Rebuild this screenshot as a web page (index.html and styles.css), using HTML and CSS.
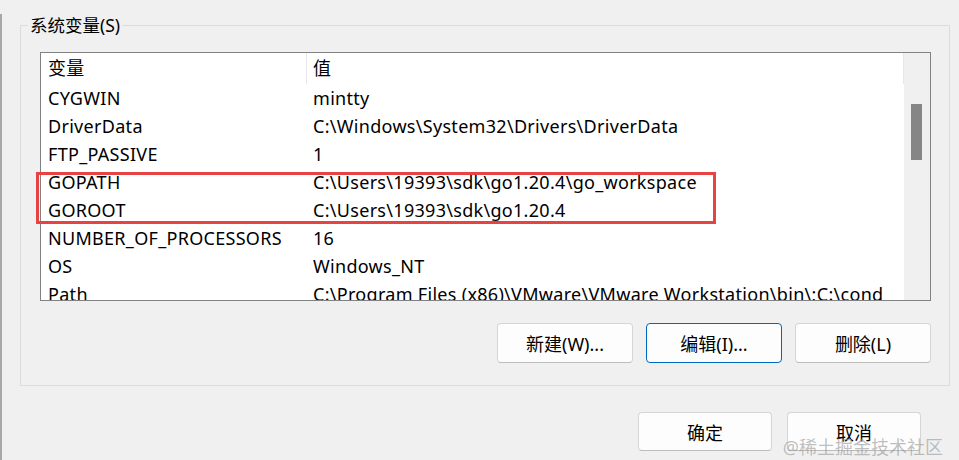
FILE: index.html
```html
<!DOCTYPE html>
<html lang="zh-CN">
<head>
<meta charset="utf-8"/>
<title>环境变量</title>
<link rel="stylesheet" href="styles.css">
</head>
<body>
<div class="dialog">
  <fieldset class="group">
    <legend>系统变量(S)</legend>
    <div class="list">
      <div class="list-body">
        <div class="row head"><span class="col-name">变量</span><span class="col-value">值</span></div>
        <div class="row"><span class="col-name">CYGWIN</span><span class="col-value">mintty</span></div>
        <div class="row"><span class="col-name">DriverData</span><span class="col-value">C:\Windows\System32\Drivers\DriverData</span></div>
        <div class="row"><span class="col-name">FTP_PASSIVE</span><span class="col-value">1</span></div>
        <div class="row"><span class="col-name">GOPATH</span><span class="col-value">C:\Users\19393\sdk\go1.20.4\go_workspace</span></div>
        <div class="row"><span class="col-name">GOROOT</span><span class="col-value">C:\Users\19393\sdk\go1.20.4</span></div>
        <div class="row"><span class="col-name">NUMBER_OF_PROCESSORS</span><span class="col-value">16</span></div>
        <div class="row"><span class="col-name">OS</span><span class="col-value">Windows_NT</span></div>
        <div class="row"><span class="col-name">Path</span><span class="col-value">C:\Program Files (x86)\VMware\VMware Workstation\bin\;C:\conda3\condabin</span></div>
      </div>
      <div class="scrollbar"><div class="thumb"></div></div>
      <div class="mark"></div>
    </div>
    <div class="actions">
      <button class="btn">新建(W)...</button>
      <button class="btn focused">编辑(I)...</button>
      <button class="btn">删除(L)</button>
    </div>
  </fieldset>
  <div class="footer">
    <button class="btn small">确定</button>
    <button class="btn small">取消</button>
  </div>
  <div class="watermark">@稀土掘金技术社区</div>
</div>
</body>
</html>
```

FILE: styles.css
```css
html, body {
  margin: 0;
  height: 100%;
}
body {
  background: #f0f0f0;
  font-family: "Noto Sans", "Noto Sans CJK SC", sans-serif;
  font-size: 17px;
  color: #000;
  overflow: hidden;
}
.dialog {
  position: relative;
  height: 100%;
  border-left: 2px solid #a8a8a8;
  box-sizing: border-box;
}

/* group box */
.group {
  margin: 14px 9px 0 18px;
  padding: 16px 18px 22px 19px;
  border: 1px solid #dcdcdc;
  min-width: 0;
}
.group legend {
  margin-left: -12px;
  padding: 0 2px;
  line-height: 22px;
  font-size: 17.5px;
}

/* list view */
.list {
  position: relative;
  display: grid;
  grid-template-columns: 1fr 26px;
  height: 249px;
  box-sizing: border-box;
  border: 1px solid #828282;
  background: #fff;
  font-size: 18px;
  letter-spacing: 0.3px;
}
.list-body {
  overflow: hidden;
}
.row {
  display: flex;
  height: 28px;
  line-height: 28px;
  white-space: nowrap;
}
.row.head {
  height: 31px;
  line-height: 31px;
  border-right: 1px solid #e8e8e8;
}
.col-name {
  width: 266px;
  flex: none;
  padding-left: 7px;
  box-sizing: border-box;
}
.head .col-name {
  border-right: 1px solid #e8e8e8;
}
.col-value {
  width: 576px;
  flex: none;
  padding-left: 6px;
  box-sizing: border-box;
  overflow: hidden;
}
.scrollbar {
  background: #f0f0f0;
  padding: 51px 0 0 7px;
}
.thumb {
  width: 11px;
  height: 56px;
  background: #868686;
}
.mark {
  position: absolute;
  left: -5px;
  top: 119px;
  width: 680px;
  height: 52px;
  box-sizing: border-box;
  border: 3px solid #e84343;
}

/* buttons */
.actions {
  display: flex;
  justify-content: flex-end;
  gap: 13px;
  margin-top: 22px;
}
.btn {
  width: 136px;
  height: 40px;
  font: inherit;
  font-size: 18px;
  color: #000;
  background: #fdfdfd;
  border: 1px solid #d5d5d5;
  border-bottom-color: #bcbcbc;
  border-radius: 4px;
  padding: 0;
}
.btn.focused {
  border-color: #0067c0;
}
.footer {
  display: flex;
  justify-content: flex-end;
  gap: 15px;
  margin-top: 26px;
  padding-right: 38px;
}
.btn.small {
  width: 134px;
  height: 39px;
}
.watermark {
  position: absolute;
  right: 16px;
  top: 423px;
  font-size: 18px;
  line-height: 20px;
  color: rgba(150, 150, 150, 0.6);
}
```
